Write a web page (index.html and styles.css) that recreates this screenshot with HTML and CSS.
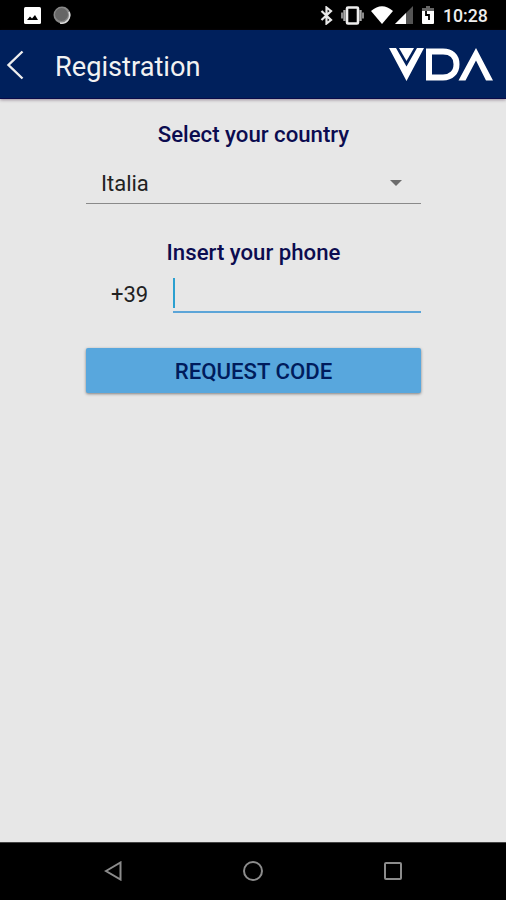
FILE: index.html
```html
<!DOCTYPE html>
<html lang="en">

<head>
    <meta charset="UTF-8">
    <meta name="viewport" content="width=device-width, initial-scale=1.0">
    <title>Registration</title>
    <link rel="stylesheet" href="styles.css">
</head>

<body>
    <div class="phone">
        <div class="status-bar">
            <div class="notices">
                <svg width="17" height="17" viewBox="0 0 17 17">
                    <rect width="17" height="17" rx="1.500" fill="#fff" />
                    <path d="M3 13l3-3.500 2 2L11 8l3 5z" fill="#000" />
                </svg>
                <svg width="18" height="18" viewBox="0 0 18 18">
                    <circle cx="9" cy="9" r="8.500" fill="#888" />
                    <circle cx="8.500" cy="8.500" r="6.500" fill="#666" />
                    <path d="M16 6a8 8 0 0 1-9 11" fill="none" stroke="#ddd" stroke-width="1.500" />
                </svg>
            </div>
            <div class="system">
                <!-- bluetooth -->
                <svg class="bluetooth" width="13" height="19" viewBox="0 0 13 19">
                    <path d="M1.500 5l9.500 9-4.500 3.500v-16L11 5l-9.500 9" fill="none" stroke="#e8e8e8" stroke-width="2.200" />
                </svg>
                <!-- vibrate -->
                <svg class="vibrate" width="23" height="19" viewBox="0 0 23 19">
                    <rect x="6" y="1.500" width="11" height="16" rx="1" fill="none" stroke="#eee" stroke-width="2.600" />
                    <path d="M3.500 4v11M19.500 4v11" stroke="#aaa" stroke-width="2.400" />
                    <path d="M1 6.500v6M22 6.500v6" stroke="#999" stroke-width="1.800" />
                </svg>
                <!-- wifi -->
                <svg class="wifi" width="22" height="18" viewBox="0 0 22 18">
                    <path d="M0 5Q11-4.500 22 5L11 18z" fill="#fff" />
                </svg>
                <!-- signal -->
                <svg class="signal" width="18" height="18" viewBox="0 0 18 18">
                    <path d="M0 18L18 0v18z" fill="#555" />
                    <path d="M0 18L11 7v11z" fill="#fff" />
                </svg>
                <!-- battery -->
                <svg class="battery" width="12" height="18" viewBox="0 0 12 18">
                    <path d="M4 0h4v2h4v4H0V2h4z" fill="#666" />
                    <path d="M0 5h12v12q0 1-1 1H1q-1 0-1-1z" fill="#fff" />
                    <path d="M4 5v4h3v5" fill="none" stroke="#000" stroke-width="1.800" />
                </svg>
                <span class="clock">10:28</span>
            </div>
        </div>

        <div class="header">
            <svg class="back" width="18" height="30" viewBox="0 0 18 30">
                <path d="M16.500 1.500L2.500 15l14 13.500" fill="none" stroke="#eee" stroke-width="2.400" />
            </svg>
            <h1>Registration</h1>
            <svg class="logo" width="104" height="33" viewBox="0 0 104 33">
                <path d="M0 0h7l10.500 18.500L28 0h7L17.500 33z" fill="#fff" />
                <path d="M10 0h15l-7.500 13z" fill="#fff" />
                <path d="M40 3.500h14c8 0 13.500 4.500 13.500 12.700S62 29.500 54 29.500H40z" fill="none" stroke="#fff" stroke-width="6" />
                <path d="M69.500 32.500L87 0l17 32.500h-7L87 12.500 76.500 32.500z" fill="#fff" />
            </svg>
        </div>

        <div class="content">
            <h2>Select your country</h2>
            <div class="select">
                <span>Italia</span>
                <i class="arrow"></i>
            </div>
            <h2>Insert your phone</h2>
            <div class="phone-row">
                <span class="prefix">+39</span>
                <div class="number">
                    <i class="cursor"></i>
                </div>
            </div>
            <button class="btn">REQUEST CODE</button>
        </div>

        <div class="nav-bar">
            <svg width="18" height="20" viewBox="0 0 18 20">
                <path d="M2 10L16.500 1.500v17z" fill="none" stroke="#8c8c8c" stroke-width="2" />
            </svg>
            <svg width="20" height="20" viewBox="0 0 20 20">
                <circle cx="10" cy="10" r="9" fill="none" stroke="#8c8c8c" stroke-width="2" />
            </svg>
            <svg width="18" height="18" viewBox="0 0 18 18">
                <rect x="1" y="1" width="16" height="16" rx="1" fill="none" stroke="#8c8c8c" stroke-width="2" />
            </svg>
        </div>
    </div>
</body>

</html>
```
FILE: styles.css
```css
* {
    margin: 0;
    padding: 0;
    box-sizing: border-box;
}

body {
    background-color: #000;
    font-family: Roboto, "Liberation Sans", sans-serif;
}

svg {
    display: block;
    flex: none;
}

.phone {
    width: 506px;
    height: 900px;
    display: flex;
    flex-direction: column;
    background-color: #e7e7e7;
    overflow: hidden;
}

.status-bar {
    height: 30px;
    padding: 0 18px 0 24px;
    display: flex;
    justify-content: space-between;
    align-items: center;
    background-color: #000;
}

.notices,
.system {
    display: flex;
    align-items: center;
}

.notices {
    gap: 12px;
}

.vibrate {
    margin-left: 8px;
}

.wifi {
    margin-left: 7px;
}

.signal {
    margin-left: 2px;
}

.battery {
    margin-left: 9px;
}

.clock {
    width: 45px;
    margin-left: 9px;
    padding-top: 2px;
    color: #eee;
    font-size: 17.7px;
    font-weight: 500;
    line-height: 30px;
    white-space: nowrap;
}

.header {
    height: 69px;
    padding: 0 13px 0 6px;
    display: flex;
    align-items: center;
    background-color: #00205c;
    border-bottom: 1px solid #0a0a48;
    box-shadow: 0 1px 3px rgba(60, 30, 60, 0.45);
}

.back {
    margin-top: 2px;
}

.header h1 {
    margin-left: 31px;
    padding-top: 5px;
    color: #f2f2f2;
    font-size: 27.2px;
    font-weight: 400;
}

.logo {
    margin-left: auto;
}

.content {
    flex: 1;
    padding: 20px 85px 0 86px;
}

.content h2 {
    color: #0c0c50;
    font-size: 22.2px;
    font-weight: 500;
    line-height: 30px;
    text-align: center;
}

.select {
    height: 55px;
    margin-bottom: 33px;
    padding: 15px 19px 0 15px;
    display: flex;
    justify-content: space-between;
    border-bottom: 1px solid #8a8a8a;
    color: #222;
    font-size: 22px;
    line-height: 40px;
}

.arrow {
    margin-top: 16px;
    width: 0;
    height: 0;
    border: 6px solid transparent;
    border-top-color: #6c6c6c;
    border-bottom: none;
}

.phone-row {
    height: 46px;
    display: flex;
}

.prefix {
    width: 87px;
    padding-left: 25px;
    color: #222;
    font-size: 22px;
    line-height: 56px;
}

.number {
    flex: 1;
    padding-top: 11px;
    border-bottom: 2px solid #5ca5d8;
}

.cursor {
    display: block;
    width: 2px;
    height: 30px;
    background-color: #2ba0d0;
}

.btn {
    width: 100%;
    height: 45px;
    margin-top: 35px;
    padding-top: 1px;
    border: none;
    border-radius: 2px;
    background-color: #58a7dd;
    box-shadow: 0 1px 3px rgba(0, 0, 0, 0.45);
    color: #001c5c;
    font-family: inherit;
    font-size: 22.2px;
    font-weight: 500;
}

.nav-bar {
    height: 58px;
    padding: 0 104px 2px;
    display: flex;
    justify-content: space-between;
    align-items: center;
    background-color: #000;
    border-top: 1px solid #444;
}
```
